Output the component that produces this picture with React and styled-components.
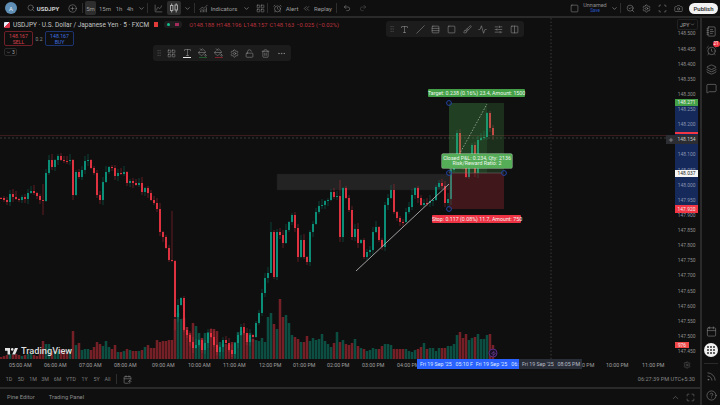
import React from "react";
import styled, { createGlobalStyle } from "styled-components";
import {
  Search, CirclePlus, ChevronDown, ChartSpline, ChartNoAxesCombined, LayoutGrid, AlarmClock,
  ChevronsLeft, Undo2, Redo2, Square, SearchCheck, Settings, Scan, Camera, GripVertical, Type,
  PaintBucket, LockOpen, Trash2, Ellipsis, Slash, Rows3, Brush, Activity, SlidersHorizontal,
  Columns2, NotebookText, Layers, MessageSquare, Calendar, Rss, CircleHelp, CalendarArrowUp,
  Maximize, ChevronUp, Plus, Zap,
} from "lucide-react";

const Global = createGlobalStyle`
  html, body { margin: 0; padding: 0; background: #0f0f0f; }
  body { font-family: Roboto, "Liberation Sans", sans-serif; color: #9c9c9c; overflow: hidden; }
  svg { display: block; }
`;

const Page = styled.div`
  width: 720px;
  height: 405px;
  display: flex;
  flex-direction: column;
  background: #0f0f0f;
`;

const TopBar = styled.div`
  height: 16px;
  display: flex;
  align-items: center;
  border-bottom: 2px solid #2a2a2a;
  font-size: 6px;
  flex: none;
`;

const Cell = styled.div`
  width: ${(p) => p.$w}px;
  height: 14px;
  flex: none;
  display: flex;
  align-items: center;
  justify-content: center;
  border-radius: 2px;
  color: ${(p) => p.$color || "#9c9c9c"};
  background: ${(p) => (p.$active ? "#2e2e2e" : "transparent")};
`;

const Avatar = styled.div`
  width: 12px;
  height: 12px;
  border-radius: 50%;
  background: #5f8fb5;
  color: #e6eef5;
  font-size: 6px;
  display: flex;
  align-items: center;
  justify-content: center;
`;

const Symbol = styled.b`
  color: #cfcfcf;
  font-size: 6px;
  margin-left: 2px;
`;

const VLine = styled.div`
  width: 1px;
  height: 10px;
  margin: 0 ${(p) => p.$m ?? 1}px;
  background: #2e2e2e;
  flex: none;
`;

const Publish = styled.button`
  width: 29px;
  height: 11px;
  margin-left: 3px;
  padding: 0;
  border: 0;
  border-radius: 6px;
  background: #f2f2f2;
  color: #222;
  font: 500 6px Roboto, sans-serif;
`;

const Layout = styled.div`
  width: 100%;
  text-align: center;
  line-height: 5.5px;
  font-size: 5.5px;
  color: #8d8d8d;
  span { display: block; color: #2856c8; font-size: 4.5px; line-height: 5px; }
`;

const Body = styled.div`
  flex: 1;
  min-height: 0;
  display: flex;
`;

const Main = styled.div`
  width: 700px;
  flex: none;
  display: flex;
  flex-direction: column;
`;

const ChartRow = styled.div`
  height: 341px;
  flex: none;
  display: flex;
`;

const Stage = styled.div`
  position: relative;
  width: 675px;
  flex: none;
`;

const Legend = styled.div`
  position: absolute;
  left: 4px;
  top: 2px;
  display: flex;
  flex-direction: column;
  align-items: flex-start;
  gap: 2px;
`;

const LegendRow = styled.div`
  display: flex;
  align-items: center;
  font-size: 6.5px;
  height: 9px;
  white-space: nowrap;
  color: #c4c4c4;
`;

const Flag = styled.span`
  width: 6px;
  height: 6px;
  margin-right: 3px;
  border-radius: 1px;
  background: linear-gradient(135deg, #e8eef8 50%, #d8344a 50%);
`;

const RedFlag = styled.span`
  width: 4px;
  height: 5px;
  margin-left: 5px;
  background: #e33a3a;
`;

const StatusPill = styled.span`
  width: 18px;
  height: 7px;
  margin-left: 6px;
  padding: 0 3px;
  box-sizing: border-box;
  display: flex;
  align-items: center;
  justify-content: space-between;
  border-radius: 3px;
  background: #1e1e1e;
  i { width: 3px; height: 3px; border-radius: 50%; background: #14c08f; }
  u { width: 4px; height: 3px; background: #a32c5d; }
`;

const Ohlc = styled.span`
  margin-left: 7px;
  color: #b8323c;
  font-size: 5.8px;
  word-spacing: 0.5px;
`;

const Trade = styled.div`
  display: flex;
  align-items: center;
`;

const TradeBox = styled.div`
  width: 29px;
  height: 15px;
  box-sizing: border-box;
  border: 1px solid ${(p) => p.$color};
  border-radius: 2px;
  color: ${(p) => p.$text};
  font-size: 5.2px;
  line-height: 6px;
  text-align: center;
  padding-top: 1px;
`;

const Spread = styled.span`
  width: 12px;
  text-align: center;
  font-size: 5px;
  color: #8a8a8a;
`;

const Collapse = styled.div`
  width: 13px;
  height: 8px;
  box-sizing: border-box;
  border: 1px solid #2a2a2a;
  border-radius: 2px;
  display: flex;
  align-items: center;
  justify-content: center;
  gap: 1px;
  font-size: 5px;
  color: #a0a0a0;
`;

const FloatBar = styled.div`
  position: absolute;
  left: ${(p) => p.$x}px;
  top: ${(p) => p.$y}px;
  width: 138px;
  height: 16px;
  display: flex;
  align-items: center;
  justify-content: space-between;
  padding: 0 2px;
  box-sizing: border-box;
  border-radius: 3px;
  background: #1c1c1c;
  color: #a4a4a4;
`;

const ToolCell = styled.div`
  width: ${(p) => p.$w || 16}px;
  display: flex;
  flex-direction: column;
  align-items: center;
  &::after {
    content: "";
    display: ${(p) => (p.$mark ? "block" : "none")};
    width: 8px;
    height: 1px;
    margin-top: 0.5px;
    background: ${(p) => p.$mark};
  }
`;

const Tag = styled.div`
  position: absolute;
  left: ${(p) => p.$x}px;
  top: ${(p) => p.$y}px;
  width: ${(p) => p.$w}px;
  height: ${(p) => p.$h}px;
  border-radius: 1px;
  background: ${(p) => p.$bg};
  box-shadow: ${(p) => (p.$line ? `0 0 0 0.5px ${p.$line}` : "none")};
  color: #eef5ee;
  font-size: 5.3px;
  line-height: ${(p) => (p.$h > 10 ? "5.6px" : `${p.$h}px`)};
  padding-top: ${(p) => (p.$h > 10 ? 1.5 : 0)}px;
  box-sizing: border-box;
  text-align: center;
  white-space: nowrap;
`;

const LogoWrap = styled.div`
  position: absolute;
  left: 5px;
  bottom: 3px;
  display: flex;
  align-items: center;
  gap: 3px;
  color: #dedede;
  font-size: 9.2px;
  font-weight: 500;
`;

const PriceAxis = styled.div`
  position: relative;
  width: 25px;
  flex: none;
  padding-top: 8.4px;
  box-sizing: border-box;
`;

const Tick = styled.div`
  position: relative;
  z-index: 1;
  height: 15.14px;
  line-height: 15.14px;
  text-align: right;
  padding-right: 4.5px;
  font-size: 4.9px;
  color: ${(p) => (p.$inBand ? "#8b96b2" : "#8f8f8f")};
`;

const Band = styled.div`
  position: absolute;
  left: 0;
  top: 81px;
  width: 23px;
  height: 114px;
  background: #15295a;
`;

const PriceLabel = styled.div`
  position: absolute;
  z-index: 2;
  left: 0;
  top: ${(p) => p.$y}px;
  width: ${(p) => p.$w || 23}px;
  height: ${(p) => p.$h || 7}px;
  line-height: ${(p) => p.$h || 7}px;
  background: ${(p) => p.$bg};
  color: ${(p) => p.$color || "#f0f0f0"};
  font-size: 4.9px;
  text-align: center;
`;

const PlusBox = styled.div`
  position: absolute;
  left: -9px;
  top: 117px;
  width: 9px;
  height: 9px;
  display: flex;
  align-items: center;
  justify-content: center;
  background: #2b2d33;
  color: #d8d8d8;
`;

const CurrencyBtn = styled.div`
  position: absolute;
  left: 2px;
  top: 1px;
  width: 21px;
  height: 11px;
  box-sizing: border-box;
  padding: 0 2px 0 2px;
  display: flex;
  align-items: center;
  justify-content: space-between;
  background: #0f0f0f;
  border: 1px solid #222;
  border-radius: 2px;
  font-size: 5.3px;
  color: #a8a8a8;
`;

const TimeAxis = styled.div`
  position: relative;
  height: 12px;
  flex: none;
  display: flex;
  align-items: center;
  padding-left: 9px;
  font-size: 5.3px;
  color: #a0a0a0;
`;

const TimeLabel = styled.span`
  width: ${(p) => p.$w}px;
  flex: none;
  white-space: nowrap;
`;

const GearCell = styled.div`
  position: absolute;
  left: 683px;
  top: 2px;
  color: #777;
`;

const Cursor = styled.div`
  position: absolute;
  left: 417px;
  top: 0;
  height: 10px;
  display: flex;
`;

const CursorLabel = styled.div`
  width: ${(p) => p.$w}px;
  height: 10px;
  line-height: 10px;
  overflow: hidden;
  white-space: pre;
  padding-left: 3px;
  box-sizing: border-box;
  background: ${(p) => p.$bg};
  color: ${(p) => p.$color};
  font-size: 5.3px;
`;

const RangeBar = styled.div`
  height: 16px;
  flex: none;
  display: flex;
  align-items: center;
  padding-left: 3px;
  font-size: 5.3px;
  color: #7e7e7e;
`;

const RangeBtn = styled.span`
  width: ${(p) => p.$w || 12}px;
  text-align: center;
  flex: none;
`;

const Clock = styled.span`
  margin-left: auto;
  padding-right: 5px;
  font-size: 5.6px;
  color: #858585;
`;

const BottomBar = styled.div`
  flex: 1;
  display: flex;
  align-items: center;
  border-top: 2px solid #2a2a2a;
  padding-left: 7px;
  font-size: 5.8px;
  color: #8a8a8a;
  gap: 14px;
`;

const BottomRight = styled.div`
  margin-left: auto;
  padding-right: 5px;
  display: flex;
  align-items: center;
  gap: 6px;
  color: #8a8a8a;
`;

const SideBar = styled.div`
  flex: 1;
  border-left: 2px solid #2a2a2a;
  display: flex;
  flex-direction: column;
  align-items: center;
  padding-top: 4px;
  color: #8f8f8f;
`;

const SideIcon = styled.div`
  position: relative;
  height: ${(p) => p.$h || 19}px;
  display: flex;
  align-items: center;
  justify-content: center;
  flex: none;
`;

const Badge = styled.span`
  position: absolute;
  top: 0;
  right: -3px;
  min-width: 7px;
  height: 6px;
  line-height: 6px;
  border-radius: 3px;
  background: #f23645;
  color: #fff;
  font-size: 4.5px;
  text-align: center;
`;

const AppsBtn = styled.div`
  width: 14px;
  height: 14px;
  border-radius: 50%;
  background: #f1f1f1;
  display: grid;
  grid-template-columns: repeat(3, 2.2px);
  grid-auto-rows: 2.2px;
  gap: 0.7px;
  align-content: center;
  justify-content: center;
  i { border-radius: 50%; background: #333; }
`;

const SideSep = styled.div`
  width: 14px;
  height: 1px;
  margin: 4px 0 3px;
  background: #2a2a2a;
`;

const Fill = styled.div`
  flex: 1;
`;

// close price (y px) of each candle, one every 3px starting at x=1
const closes = [
  198, 200, 202, 194, 197, 199, 200, 197, 199, 193,
  191, 193, 196, 200, 201, 173, 160, 167, 160, 156,
  160, 161, 161, 160, 195, 172, 177, 170, 161, 160,
  168, 173, 195, 200, 182, 172, 167, 168, 176, 173,
  174, 172, 183, 181, 183, 185, 183, 192, 188, 193,
  200, 203, 209, 232, 237, 248, 260, 261, 317, 305,
  298, 330, 335, 342, 348, 345, 340, 350, 343, 333,
  337, 345, 352, 347, 340, 343, 350, 354, 343, 335,
  327, 333, 342, 335, 337, 323, 313, 293, 278, 273,
  232, 277, 232, 235, 243, 230, 222, 215, 228, 257,
  240, 257, 262, 232, 224, 212, 206, 205, 201, 200,
  192, 197, 196, 237, 188, 198, 210, 237, 229, 243,
  240, 257, 252, 250, 232, 227, 240, 247, 205, 198,
  190, 212, 218, 222, 222, 212, 207, 195, 188, 198,
  205, 203, 203, 201, 200, 187, 183, 186, 203, 199,
  170, 157, 133, 160, 165, 177, 158, 145, 173, 140,
  138, 137, 113, 128, 135,
];

const volumes = [
  2, 3, 4, 5, 4, 5, 4, 3, 4, 5, 5, 4, 3, 5,
  18, 15, 15, 8, 8, 8, 10, 8, 6, 10, 28, 14, 16, 9, 10, 10, 9, 12, 17, 15, 13, 18, 12, 10, 14, 7, 7, 8, 10, 9, 8, 8, 8, 9, 12, 14, 11, 11, 19, 17, 18, 18, 19,
  19, 40, 46, 40, 41, 32, 26, 36, 33, 26, 21, 26, 27, 30, 30, 28, 17, 15, 15, 14, 17, 17, 27, 28, 26, 26, 26, 20, 19, 18, 21, 17, 42, 46, 35, 30, 60, 42, 44, 36,
  24, 22, 20, 17, 17, 23, 18, 21, 19, 20, 25, 18, 15, 12, 16, 27, 17, 19, 15, 14, 16, 20, 13, 11, 10, 8, 9, 11, 10, 10, 13, 15, 15, 14, 10, 10, 10, 10, 10, 8, 7,
  9, 10, 12, 16, 10, 11, 11, 8, 11, 11, 11, 13, 13, 15, 24, 27, 21, 25, 19, 21, 22, 25, 20, 20, 24, 25, 14,
];

const wickTall = { 14: [184, 215], 57: [211, 262], 58: [260, 330], 90: [222, 240], 113: [180, 242], 150: [160, 205] };

const candles = closes.map((close, i) => {
  const open = i === 0 ? close : closes[i - 1];
  const top = Math.min(open, close);
  const bottom = Math.max(open, close);
  const extra = wickTall[i];
  return {
    x: 1 + i * 3,
    top,
    h: Math.max(bottom - top, 1),
    up: close < open,
    hi: extra ? extra[0] : top - ((i * 7) % 6) - 1,
    lo: extra ? extra[1] : bottom + ((i * 11) % 5) + 1,
    vol: volumes[i],
  };
});

const UP = "#0a9b82";
const DOWN = "#f23645";

const handles = [[449, 103], [449, 173], [504, 173], [449, 209]];

const Chart = () => (
  <svg width="675" height="341" viewBox="0 18 675 341">
    <line x1="551" y1="18" x2="551" y2="359" stroke="#3a3a3a" strokeDasharray="1.5 2" />
    <line x1="0" y1="135.5" x2="675" y2="135.5" stroke="#3a1c1f" />
    <line x1="0" y1="138" x2="675" y2="138" stroke="#4a4a4a" strokeDasharray="2 2" strokeWidth="0.7" />
    {candles.map((c) => (
      <rect key={c.x} x={c.x - 1.25} y={359 - c.vol} width="2.5" height={c.vol} fill={c.up ? UP : DOWN} opacity="0.45" />
    ))}
    <rect x="277" y="174" width="172" height="16" fill="#8a8a8a" opacity="0.16" stroke="#555" strokeWidth="0.4" />
    {candles.map((c) => (
      <g key={c.x} fill={c.up ? UP : DOWN}>
        <rect x={c.x - 0.35} y={c.hi} width="0.7" height={c.lo - c.hi} opacity="0.5" />
        <rect x={c.x - 0.9} y={c.top} width="1.8" height={c.h} />
      </g>
    ))}
    <rect x="449" y="103" width="55" height="70" fill="#4caf50" opacity="0.2" />
    <rect x="449" y="103" width="38" height="70" fill="#4caf50" opacity="0.13" />
    <rect x="449" y="173" width="55" height="36" fill="#f23645" opacity="0.22" />
    <line x1="449" y1="173" x2="504" y2="173" stroke="#777" strokeWidth="0.5" />
    <line x1="356" y1="271" x2="449" y2="184" stroke="#b0b0b0" strokeWidth="0.9" />
    <line x1="449" y1="173" x2="487" y2="104" stroke="#b8c4b8" strokeWidth="0.7" strokeDasharray="1.5 1.5" />
    {handles.map(([x, y]) => (
      <circle key={`${x}-${y}`} cx={x} cy={y} r="2.4" fill="#0f0f0f" fillOpacity="0.5" stroke="#2346a8" strokeWidth="1" />
    ))}
    <circle cx="493" cy="353" r="4" fill="#1a1026" stroke="#5b2b86" strokeWidth="1" />
  </svg>
);

const TvLogo = () => (
  <svg width="13" height="8" viewBox="0 0 36 20" fill="#e4e4e4">
    <path d="M14 20H7V9H0V2h14v18Z" />
    <circle cx="20" cy="5.5" r="3.5" />
    <path d="M28 20h-8l7.5-18H36l-8 18Z" />
  </svg>
);

const CandleIcon = () => (
  <svg width="10" height="10" viewBox="0 0 10 10" fill="none" stroke="#b5b5b5" strokeWidth="0.9">
    <rect x="1.5" y="2.5" width="2.4" height="5" />
    <rect x="6" y="2" width="2.4" height="5" />
    <path d="M2.7 0.5v2M2.7 7.5v2M7.2 0.3v1.7M7.2 7v2.5" />
  </svg>
);

const sz = { size: 8, strokeWidth: 1.4 };
const md = { size: 9, strokeWidth: 1.3 };
const lg = { size: 11, strokeWidth: 1.2 };

// 148.150 sits under the live price label, so it is left out by showing blank text
const ticks = [
  "148.500", "148.450", "148.400", "148.350", "148.300", "148.250", "148.200", "", "148.100", "148.050",
  "148.000", "147.950", "147.900", "147.850", "147.800", "147.750", "147.700", "147.650", "147.600", "147.550",
  "147.500", "147.450",
];

const timeLabels = [
  ["05:00 AM", 35], ["06:00 AM", 35], ["07:00 AM", 35], ["08:00 AM", 38], ["09:00 AM", 36], ["10:00 AM", 35],
  ["11:00 AM", 36], ["12:00 PM", 34], ["01:00 PM", 34], ["02:00 PM", 35], ["03:00 PM", 35], ["04:00 PM", 185],
  ["0 PM", 24], ["10:00 PM", 36], ["11:00 PM", 30],
];

const ranges = [["1D"], ["5D"], ["1M"], ["3M"], ["6M", 13], ["YTD", 14], ["1Y", 13], ["5Y", 11], ["All", 11]];

export default function App() {
  return (
    <Page>
      <Global />
      <TopBar>
        <Cell $w={22}><Avatar>A</Avatar></Cell>
        <Cell $w={42}><Search {...sz} /><Symbol>USDJPY</Symbol></Cell>
        <Cell $w={16}><CirclePlus {...md} /></Cell>
        <VLine $m={2} />
        <Cell $w={11} $active>5m</Cell>
        <Cell $w={18}>15m</Cell>
        <Cell $w={10}>1h</Cell>
        <Cell $w={12}>4h</Cell>
        <Cell $w={10}><ChevronDown size={7} /></Cell>
        <VLine />
        <Cell $w={18}><ChartSpline {...md} /></Cell>
        <Cell $w={14} $active><CandleIcon /></Cell>
        <Cell $w={12}><ChevronDown size={7} /></Cell>
        <VLine />
        <Cell $w={15}><ChartNoAxesCombined {...md} /></Cell>
        <Cell $w={26}>Indicators</Cell>
        <Cell $w={18}><ChevronDown size={7} /></Cell>
        <Cell $w={10}><LayoutGrid {...md} /></Cell>
        <VLine $m={2} />
        <Cell $w={14}><AlarmClock {...md} /></Cell>
        <Cell $w={16}>Alert</Cell>
        <Cell $w={12}><ChevronsLeft {...md} /></Cell>
        <Cell $w={22}>Replay</Cell>
        <VLine $m={2} />
        <Cell $w={16}><Undo2 {...sz} /></Cell>
        <Cell $w={16} $color="#5a5a5a"><Redo2 {...sz} /></Cell>
        <Fill />
        <Cell $w={12}><Square {...md} /></Cell>
        <Cell $w={30}><Layout>Unnamed<span>Save</span></Layout></Cell>
        <Cell $w={8}><ChevronDown size={7} /></Cell>
        <VLine $m={2} />
        <Cell $w={15}><SearchCheck {...md} /></Cell>
        <Cell $w={16}><Settings {...md} /></Cell>
        <Cell $w={16}><Scan {...md} /></Cell>
        <Cell $w={16}><Camera {...md} /></Cell>
        <Publish>Publish</Publish>
        <Cell $w={2} />
      </TopBar>
      <Body>
        <Main>
          <ChartRow>
            <Stage>
              <Chart />
              <Legend>
                <LegendRow>
                  <Flag />
                  USDJPY · U.S. Dollar / Japanese Yen · 5 · FXCM
                  <RedFlag />
                  <StatusPill><i /><u /></StatusPill>
                  <Ohlc>O148.188 H148.196 L148.157 C148.163 −0.025 (−0.02%)</Ohlc>
                </LegendRow>
                <Trade>
                  <TradeBox $color="#6e1f27" $text="#d8404c">148.167<br />SELL</TradeBox>
                  <Spread>0.2</Spread>
                  <TradeBox $color="#1c3470" $text="#3f6fe0">148.167<br />BUY</TradeBox>
                </Trade>
                <Collapse><ChevronDown size={5} />3</Collapse>
              </Legend>
              <FloatBar $x={153} $y={27}>
                <ToolCell $w={9}><GripVertical size={8} color="#444" /></ToolCell>
                <ToolCell><LayoutGrid {...md} /></ToolCell>
                <ToolCell $mark="#e8e8e8"><Type {...md} /></ToolCell>
                <ToolCell $mark="#1f5a2c"><PaintBucket {...md} /></ToolCell>
                <ToolCell $mark="#7a2028"><PaintBucket {...md} /></ToolCell>
                <ToolCell><Settings {...md} /></ToolCell>
                <ToolCell><LockOpen {...md} /></ToolCell>
                <ToolCell><Trash2 {...md} /></ToolCell>
                <ToolCell><Ellipsis {...md} /></ToolCell>
              </FloatBar>
              <FloatBar $x={386} $y={3}>
                <ToolCell $w={9}><GripVertical size={8} color="#444" /></ToolCell>
                <ToolCell><Type {...md} /></ToolCell>
                <ToolCell><Slash {...md} /></ToolCell>
                <ToolCell><Rows3 {...md} /></ToolCell>
                <ToolCell><Square {...md} /></ToolCell>
                <ToolCell><Brush {...md} /></ToolCell>
                <ToolCell><Activity {...md} /></ToolCell>
                <ToolCell><SlidersHorizontal {...md} /></ToolCell>
                <ToolCell><Columns2 {...md} /></ToolCell>
              </FloatBar>
              <Tag $x={428} $y={71} $w={97} $h={8} $bg="#43a047">Target: 0.238 (0.16%) 23.4, Amount: 1500</Tag>
              <Tag $x={442} $y={136} $w={70} $h={14} $bg="#55ad58" $line="#a9d8ab">Closed P&amp;L: 0.234, Qty: 2136<br />Risk/Reward Ratio: 2</Tag>
              <Tag $x={432} $y={197} $w={89} $h={8} $bg="#ee3345">Stop: 0.117 (0.08%) 11.7, Amount: 750</Tag>
              <LogoWrap><TvLogo />TradingView</LogoWrap>
              <Tag $x={490.5} $y={332.5} $w={5} $h={5} $bg="transparent"><Zap size={5} color="#a25fd8" /></Tag>
            </Stage>
            <PriceAxis>
              <Band />
              {ticks.map((t, i) => <Tick key={i} $inBand={i > 4 && i < 13}>{t}</Tick>)}
              <PriceLabel $y={81} $bg="#43a047">148.271</PriceLabel>
              <PriceLabel $y={114} $h={2} $bg="#f23645" />
              <PriceLabel $y={117} $h={9} $bg="#2b2d33" $color="#c8c8c8">148.154</PriceLabel>
              <PlusBox><Plus size={6} strokeWidth={1.6} /></PlusBox>
              <PriceLabel $y={152} $bg="#f5f5f5" $color="#222">148.037</PriceLabel>
              <PriceLabel $y={187} $h={8} $bg="#f23645">147.920</PriceLabel>
              <PriceLabel $y={324} $w={14} $h={6} $bg="#f04848">976</PriceLabel>
              <CurrencyBtn>JPY<ChevronDown size={5} /></CurrencyBtn>
            </PriceAxis>
          </ChartRow>
          <TimeAxis>
            {timeLabels.map(([t, w]) => <TimeLabel key={t} $w={w}>{t}</TimeLabel>)}
            <Cursor>
              <CursorLabel $w={102} $bg="#2962ff" $color="#dfe8ff">{"Fri 19 Sep '25   05:10 F  Fri 19 Sep '25   06:"}</CursorLabel>
              <CursorLabel $w={63} $bg="#2a2e39" $color="#b8bcc6">{"Fri 19 Sep '25   08:05 PM"}</CursorLabel>
            </Cursor>
            <GearCell><Settings size={8} strokeWidth={1.2} /></GearCell>
          </TimeAxis>
          <RangeBar>
            {ranges.map(([r, w]) => <RangeBtn key={r} $w={w}>{r}</RangeBtn>)}
            <VLine $m={3} />
            <Cell $w={14}><CalendarArrowUp {...md} /></Cell>
            <Clock>06:27:39 PM UTC+5:30</Clock>
          </RangeBar>
          <BottomBar>
            <span>Pine Editor</span>
            <span>Trading Panel</span>
            <BottomRight>
              <ChevronUp {...md} />
              <Maximize {...md} />
            </BottomRight>
          </BottomBar>
        </Main>
        <SideBar>
          <SideIcon><NotebookText {...lg} /></SideIcon>
          <SideIcon><AlarmClock {...lg} /><Badge>21</Badge></SideIcon>
          <SideIcon><Layers {...lg} /></SideIcon>
          <SideIcon><MessageSquare {...lg} /></SideIcon>
          <Fill />
          <SideIcon><Calendar {...lg} /></SideIcon>
          <SideIcon $h={18}>
            <AppsBtn>{Array.from({ length: 9 }, (_, i) => <i key={i} />)}</AppsBtn>
          </SideIcon>
          <SideSep />
          <SideIcon><Rss {...lg} /></SideIcon>
          <SideIcon><CircleHelp {...lg} /></SideIcon>
        </SideBar>
      </Body>
    </Page>
  );
}
